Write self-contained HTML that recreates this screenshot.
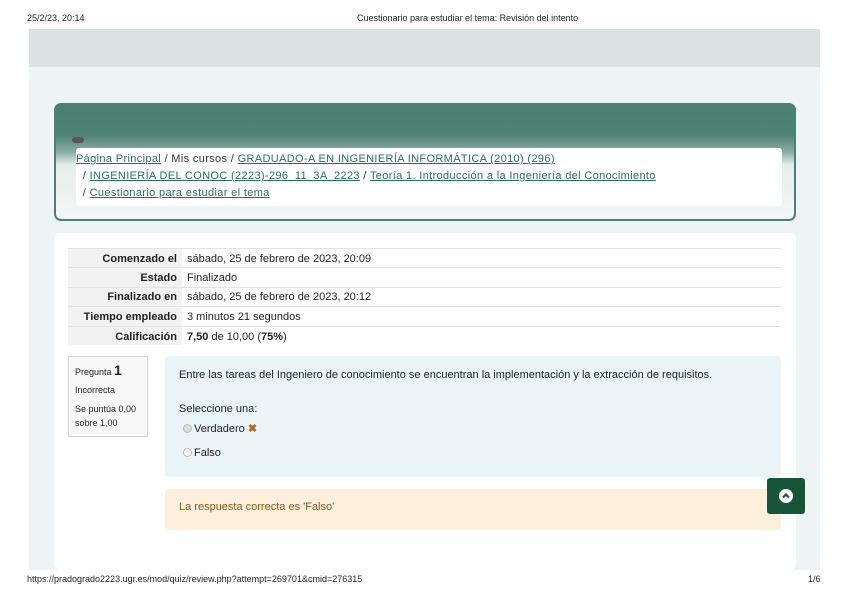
<!DOCTYPE html>
<html><head><meta charset="utf-8"><style>
*{margin:0;padding:0;box-sizing:border-box}
body{width:848px;height:599px;background:#fff;font-family:"Liberation Sans",sans-serif;position:relative;overflow:hidden;color:#222}
.hdr{position:absolute;top:13px;font-size:9px;color:#222}
.page{position:absolute;left:29px;top:29px;width:791px;height:541px;background:#eef4f4}
.band{position:absolute;left:0;top:0;width:791px;height:38px;background:#d9e4e2}
.hbox{position:absolute;left:25px;top:74px;width:742px;height:118px;border:2px solid #4f7f72;border-radius:7px;background:linear-gradient(#4b7f70 0,#4f8374 30px,#8fb0a6 48px,#e6eeeb 60px,#f3f6f5 100%)}
.pill{position:absolute;left:16px;top:32px;width:12px;height:6px;border-radius:3px;background:#555}
.crumb{position:absolute;left:20px;top:43px;width:706px;height:58px;background:#fff;border-radius:3px;font-size:11px;line-height:17px;padding:3px 0 0 0;color:#333;letter-spacing:0.35px}
.crumb a{color:#2a6e5c;text-decoration:underline}
.card{position:absolute;left:25px;top:204px;width:742px;height:337px;background:#fff;border-radius:6px}
table{position:absolute;left:14px;top:15px;width:713px;border-collapse:collapse;font-size:11px}
td{height:19.4px;border-top:1px solid #e2e2e2;padding:1px 5px 0}
td.k{width:114px;text-align:right;font-weight:bold;background:#f2f2f2}
.qi{position:absolute;left:14px;top:123px;width:80px;height:81px;border:1px solid #d6d6d6;background:#f8f8f8;font-size:9px;padding:6px;line-height:14px}
.qi b{font-size:14px}
.qc{position:absolute;left:111px;top:123px;width:616px;height:121px;background:#eaf4f7;border-radius:4px;font-size:11px;padding:12px 14px;line-height:15px}
.fb{position:absolute;left:111px;top:256px;width:616px;height:41px;background:#fcefdc;border-radius:4px;font-size:11px;color:#8a5a1a;padding:12px 14px}
.rad{display:inline-block;width:9px;height:9px;border:1px solid #bbb;border-radius:50%;vertical-align:-1px;margin-right:2px;background:#fff}
.top{position:absolute;left:767px;top:478px;width:38px;height:36px;background:#16553a;border-radius:3px}
.top div{position:absolute;left:12px;top:11px;width:14px;height:14px;border-radius:50%;background:#fff}
</style></head><body>
<div class="hdr" style="left:27px">25/2/23, 20:14</div>
<div class="hdr" style="left:357px">Cuestionario para estudiar el tema: Revisión del intento</div>
<div class="page">
<div class="band"></div>
<div class="hbox"><div class="pill"></div>
<div class="crumb"><a>Página Principal</a> / Mis cursos / <a>GRADUADO-A EN INGENIERÍA INFORMÁTICA (2010) (296)</a><br>&nbsp; / <a>INGENIERÍA DEL CONOC (2223)-296_11_3A_2223</a> / <a>Teoría 1. Introducción a la Ingeniería del Conocimiento</a><br>&nbsp; / <a>Cuestionario para estudiar el tema</a></div></div>
<div class="card">
<table>
<tr><td class="k">Comenzado el</td><td>sábado, 25 de febrero de 2023, 20:09</td></tr>
<tr><td class="k">Estado</td><td>Finalizado</td></tr>
<tr><td class="k">Finalizado en</td><td>sábado, 25 de febrero de 2023, 20:12</td></tr>
<tr><td class="k">Tiempo empleado</td><td>3 minutos 21 segundos</td></tr>
<tr><td class="k">Calificación</td><td><b>7,50</b> de 10,00 (<b>75%</b>)</td></tr>
</table>
<div class="qi">Pregunta <b>1</b><br><div style="margin-top:4px">Incorrecta</div><div style="margin-top:5px">Se puntúa 0,00</div>sobre 1,00</div>
<div class="qc">Entre las tareas del Ingeniero de conocimiento se encuentran la implementación y la extracción de requisitos.<br><div style="margin-top:19px">Seleccione una:</div><div style="margin:5px 0 0 4px"><span class="rad" style="background:#ddd"></span>Verdadero <span style="color:#b5651d;font-weight:bold">✖</span></div><div style="margin:9px 0 0 4px"><span class="rad"></span>Falso</div></div>
<div class="fb">La respuesta correcta es 'Falso'</div>
</div>
</div>
<div class="top"><div><svg width="14" height="14" viewBox="0 0 14 14"><path d="M4 8.5L7 5.5L10 8.5" stroke="#16553a" stroke-width="2.2" fill="none"/></svg></div></div>
<div class="hdr" style="left:27px;top:574px">https://pradogrado2223.ugr.es/mod/quiz/review.php?attempt=269701&amp;cmid=276315</div>
<div class="hdr" style="left:808px;top:574px">1/6</div>
</body></html>
